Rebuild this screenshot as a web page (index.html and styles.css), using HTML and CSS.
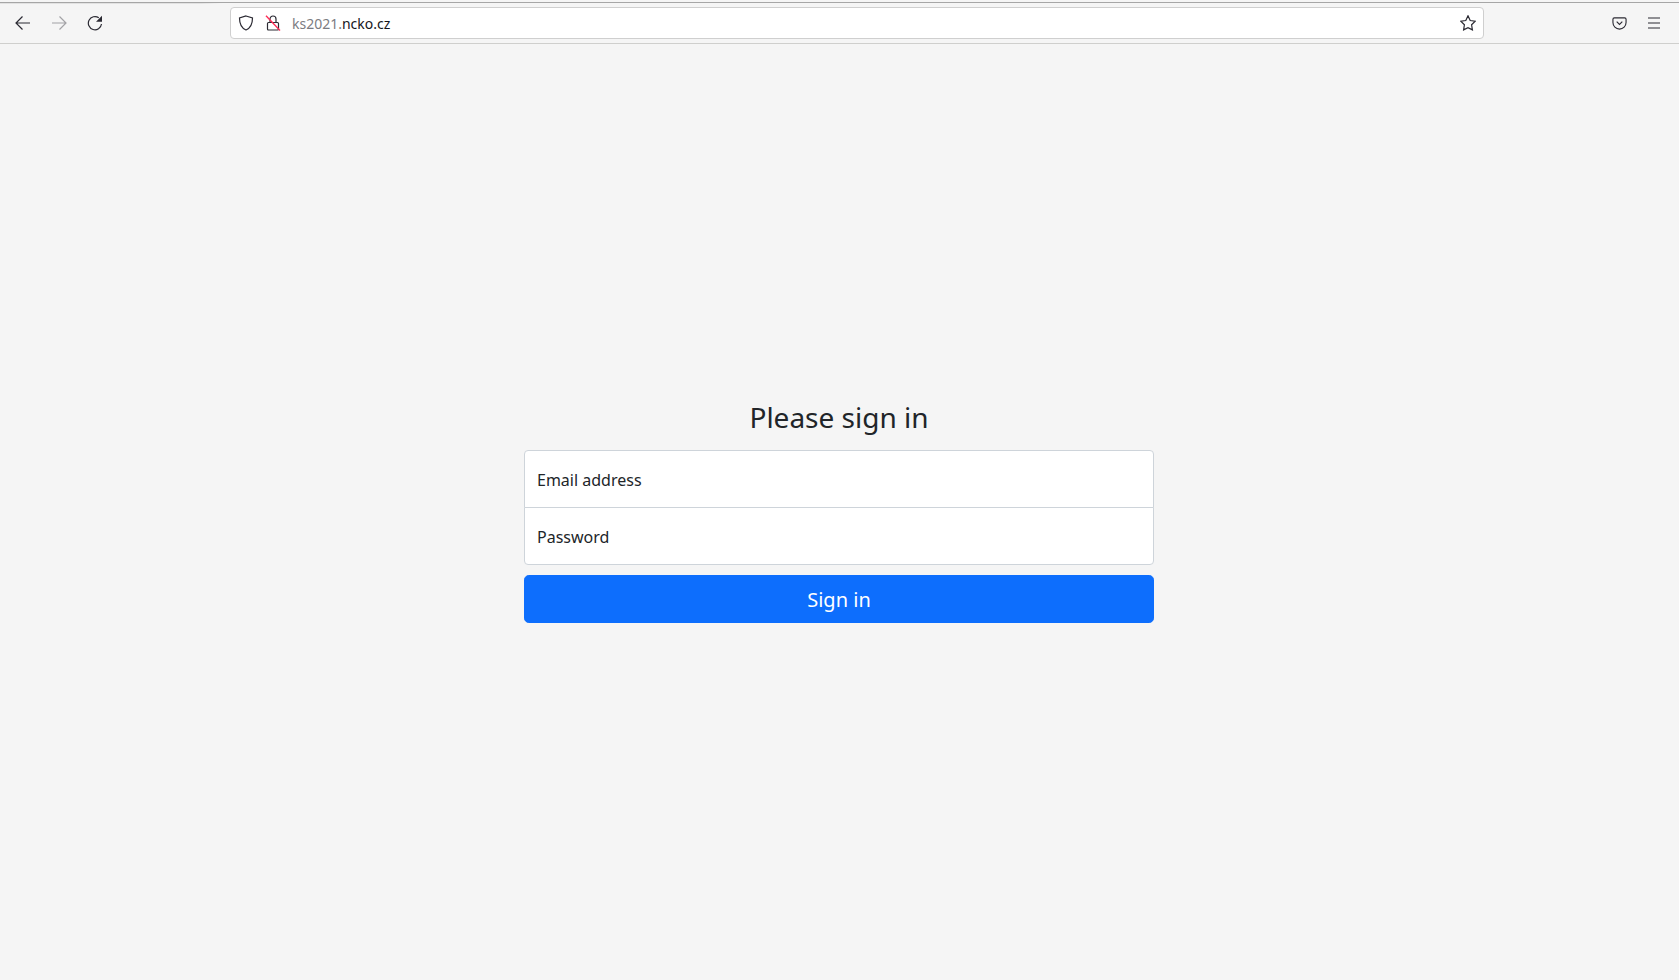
FILE: index.html
```html
<!DOCTYPE html>
<html lang="en">
<head>
  <meta charset="UTF-8" />
  <title>Please sign in</title>
  <link rel="stylesheet" href="styles.css">
</head>
<body>
  <!-- window edge above the toolbar -->
  <div class="top-line"></div>

  <!-- browser toolbar -->
  <header class="toolbar">
    <div class="nav-buttons">
      <button class="tool-btn" aria-label="Back">
        <svg viewBox="0 0 16 16"><path d="M15 8H1M7.500 1.500L1 8l6.500 6.500" /></svg>
      </button>
      <button class="tool-btn disabled" aria-label="Forward">
        <svg viewBox="0 0 16 16"><path d="M1 8h14M8.500 1.500L15 8l-6.500 6.500" /></svg>
      </button>
      <button class="tool-btn" aria-label="Reload">
        <svg viewBox="0 0 16 16"><path d="M14.500 9A6.600 6.600 0 1 1 11.800 2.800" /><path class="solid" d="M15 .8v6h-6z" /></svg>
      </button>
    </div>
    <div class="url-bar">
      <svg class="url-icon" viewBox="0 0 16 16"><path d="M8 1l6.500 2c0 6.300-1.700 10-6.500 12-4.800-2-6.500-5.700-6.500-12z" /></svg>
      <svg class="url-icon lock" viewBox="0 0 16 16">
        <path d="M5 7.500V4a3 3 0 0 1 6 0v3.500M3.500 7.500h9a1 1 0 0 1 1 1v5.500a1 1 0 0 1-1 1h-9a1 1 0 0 1-1-1V8.500a1 1 0 0 1 1-1z" />
        <path class="slash" d="M1 .8l14 14.700" />
      </svg>
      <span class="url-text"><span class="url-sub">ks2021.</span>ncko.cz</span>
      <svg class="url-icon star" viewBox="0 0 16 16"><path d="M8 .8l2.200 4.700 5 .7-3.600 3.600.8 5.100L8 12.600l-4.400 2.300.8-5.100L.8 6.200l5-.7z" /></svg>
    </div>
    <div class="end-buttons">
      <button class="tool-btn" aria-label="Pocket">
        <svg class="pocket" viewBox="0 0 16 16"><path d="M2.500 2h11A1.500 1.500 0 0 1 15 3.500V7a7 7 0 0 1-14 0V3.500A1.500 1.500 0 0 1 2.500 2z" /><path d="M5 6l3 3 3-3" /></svg>
      </button>
      <button class="tool-btn" aria-label="Menu">
        <svg viewBox="0 0 16 16"><path d="M2 3h12M2 8h12M2 13h12" /></svg>
      </button>
    </div>
  </header>

  <!-- sign in form -->
  <main class="page">
    <form class="signin">
      <h1>Please sign in</h1>
      <div class="field field-top">
        <input type="email" id="email" />
        <label for="email">Email address</label>
      </div>
      <div class="field field-bottom">
        <input type="password" id="password" />
        <label for="password">Password</label>
      </div>
      <button type="submit" class="btn-submit">Sign in</button>
    </form>
  </main>
</body>
</html>
```

FILE: styles.css
```css
* { box-sizing: border-box; margin: 0; padding: 0; }

html, body {
  width: 100%; height: 100%;
  font-family: "Noto Sans", "Open Sans", sans-serif;
  color: #212529;
  background: #f5f5f5;
  overflow: hidden;
}

body {
  display: flex;
  flex-direction: column;
}

.top-line {
  flex: none;
  height: 3px;
  border-bottom: 1px solid #a6a6a6;
}

/* toolbar */
.toolbar {
  display: flex;
  align-items: center;
  height: 41px;
  flex: none;
  padding-left: 7px;
  background: #f5f5f5 linear-gradient(90deg, #e2e2e2 200px, #f5f5f5 222px) no-repeat 0 0 / 100% 1px;
  border-bottom: 1px solid #cfcfcd;
}

.nav-buttons {
  display: flex;
  gap: 4px;
  width: 223px;
}

.end-buttons {
  display: flex;
  gap: 3px;
  margin-left: 119px;
}

.tool-btn {
  display: flex;
  align-items: center;
  justify-content: center;
  width: 32px;
  height: 32px;
  background: none;
  border: none;
}

.tool-btn svg, .url-icon {
  width: 16px;
  height: 16px;
  flex: none;
  fill: none;
  stroke: #2b2a33;
  stroke-width: 1.200;
}

.tool-btn.disabled svg { opacity: 0.4; }
.tool-btn .solid { fill: #2b2a33; stroke: none; }
.tool-btn svg.pocket { width: 15px; height: 15px; }

.url-bar {
  display: flex;
  align-items: center;
  width: 1254px;
  height: 32px;
  padding: 0 6px 0 7px;
  background: #fff;
  border: 1px solid #cfcfcf;
  border-radius: 4px;
}

.url-icon.lock { margin-left: 11px; }
.url-icon .slash { stroke: #ff2a55; stroke-width: 1.300; }
.url-icon.star { margin-left: auto; margin-right: 1px; }

.url-text {
  margin-left: 11px;
  font-size: 14px;
  color: #15141a;
}

.url-sub { color: #7c7c82; }

/* form */
.page {
  flex: 1;
  display: flex;
  align-items: center;
  justify-content: center;
  padding-right: 1px;
}

.signin {
  width: 630px;
  text-align: center;
}

.signin h1 {
  font-size: 28px;
  font-weight: 400;
  line-height: 1.2;
  margin-bottom: 16px;
}

.field {
  position: relative;
  height: 58px;
}

.field input {
  display: block;
  width: 100%;
  height: 100%;
  background: #fff;
  border: 1px solid #ced4da;
}

.field label {
  position: absolute;
  left: 13px;
  top: 1px;
  line-height: 58px;
  font-size: 16px;
}

.field-top input { border-radius: 4px 4px 0 0; }
.field-bottom { margin-top: -1px; }
.field-bottom input { border-radius: 0 0 4px 4px; }

.btn-submit {
  display: block;
  width: 100%;
  height: 48px;
  margin-top: 10px;
  font-family: inherit;
  font-size: 20px;
  color: #fff;
  background: #0d6efd;
  border: 1px solid #0d6efd;
  border-radius: 4.800px;
}
```
